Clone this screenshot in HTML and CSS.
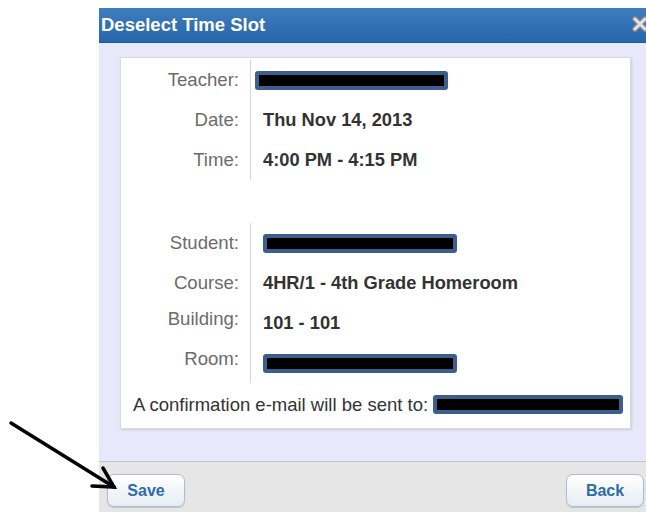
FILE: index.html
```html
<!DOCTYPE html>
<html lang="en">
<head>
<meta charset="utf-8">
<title>Deselect Time Slot</title>
<link rel="stylesheet" href="styles.css">
</head>
<body>
  <div class="dialog">
    <div class="titlebar">
      <span class="title">Deselect Time Slot</span>
      <svg class="close" width="16" height="16" viewBox="0 0 16 16" aria-label="Close">
        <path d="M3 3 L13 13 M13 3 L3 13" stroke="#8a8a8a" stroke-width="5.5" stroke-linecap="round"/>
        <path d="M3 3 L13 13 M13 3 L3 13" stroke="#e4e4e4" stroke-width="3" stroke-linecap="round"/>
      </svg>
    </div>

    <div class="content">
      <div class="panel">
        <div class="info">
          <div class="label">Teacher:</div>
          <div class="value"><span class="redact teacher"></span></div>
          <div class="label">Date:</div>
          <div class="value">Thu Nov 14, 2013</div>
          <div class="label">Time:</div>
          <div class="value">4:00 PM - 4:15 PM</div>
        </div>

        <div class="info second">
          <div class="label">Student:</div>
          <div class="value"><span class="redact student"></span></div>
          <div class="label">Course:</div>
          <div class="value">4HR/1 - 4th Grade Homeroom</div>
          <div class="label raised">Building:</div>
          <div class="value">101 - 101</div>
          <div class="label raised">Room:</div>
          <div class="value"><span class="redact student"></span></div>
        </div>

        <p class="confirm">A confirmation e-mail will be sent to: <span class="redact email"></span></p>
      </div>
    </div>

    <div class="footer">
      <button class="btn" type="button">Save</button>
      <button class="btn" type="button">Back</button>
    </div>
  </div>

  <!-- pointer drawn over the page toward the Save button -->
  <svg class="pointer" width="130" height="80" viewBox="0 0 130 80">
    <g stroke="#000" stroke-width="3.5" stroke-linecap="round" fill="none">
      <path d="M11 13 L114 77"/>
      <path d="M103 58 L114 77 L92 76"/>
    </g>
  </svg>
</body>
</html>
```

FILE: styles.css
```css
html, body {
  margin: 0;
  height: 100%;
  background: #ffffff;
  overflow: hidden;
}

body {
  padding: 8px 0 0 99px;
  box-sizing: border-box;
  font-family: "Liberation Sans", Arial, sans-serif;
  position: relative;
}

.dialog {
  width: 553px;
  display: flex;
  flex-direction: column;
}

.titlebar {
  height: 35px;
  display: flex;
  align-items: center;
  justify-content: space-between;
  padding: 0 4px 0 2px;
  background: linear-gradient(#3e7dbe, #2666a9);
  border-bottom: 1px solid #1f5a98;
  box-sizing: border-box;
}

.title {
  color: #ffffff;
  font-weight: bold;
  font-size: 18.5px;
}

.close {
  display: block;
  margin-top: -2px;
}

.content {
  background: #e8e8fa;
  padding: 14px 21px 32px;
}

.panel {
  background: #ffffff;
  border: 1px solid #dadada;
  box-shadow: 1px 1px 2px rgba(0, 0, 0, 0.12);
  padding: 2px 0 12px;
}

.info {
  display: grid;
  grid-template-columns: 130px auto;
  grid-auto-rows: 40px;
  justify-content: start;
}

.info.second {
  margin-top: 43px;
}

.label {
  display: flex;
  align-items: center;
  justify-content: flex-end;
  padding-right: 11px;
  border-right: 1px solid #d6d6d6;
  color: #6b6b6b;
  font-size: 18.6px;
}

.label.raised {
  padding-bottom: 9px;
}

.value {
  display: flex;
  align-items: center;
  padding-left: 12px;
  color: #333333;
  font-size: 18.3px;
  font-weight: bold;
}

.redact {
  display: inline-block;
  height: 19px;
  box-sizing: border-box;
  background: #000000;
  border: 4px solid #3b5e8c;
  border-radius: 3px;
}

.redact.teacher {
  width: 193px;
  margin-left: -8px;
}

.redact.student {
  width: 194px;
}

.redact.email {
  width: 190px;
  vertical-align: -3px;
}

.confirm {
  margin: 11px 0 0;
  padding-left: 12px;
  color: #333333;
  font-size: 18.5px;
  line-height: 22px;
}

.footer {
  background: #e6e6e6;
  border-top: 1px solid #c4c4c4;
  height: 60px;
  padding: 12px 8px 0 8px;
  display: flex;
  justify-content: space-between;
  align-items: flex-start;
}

.btn {
  width: 78px;
  height: 33px;
  border: 1px solid #a9bed3;
  border-radius: 7px;
  background: linear-gradient(#ffffff, #e6edf4);
  box-shadow: 0 1px 1px rgba(0, 0, 0, 0.15);
  color: #2f6ca6;
  font-family: "Liberation Sans", Arial, sans-serif;
  font-weight: bold;
  font-size: 16px;
  padding: 0;
}

.pointer {
  position: absolute;
  left: 0;
  top: 410px;
}
```
